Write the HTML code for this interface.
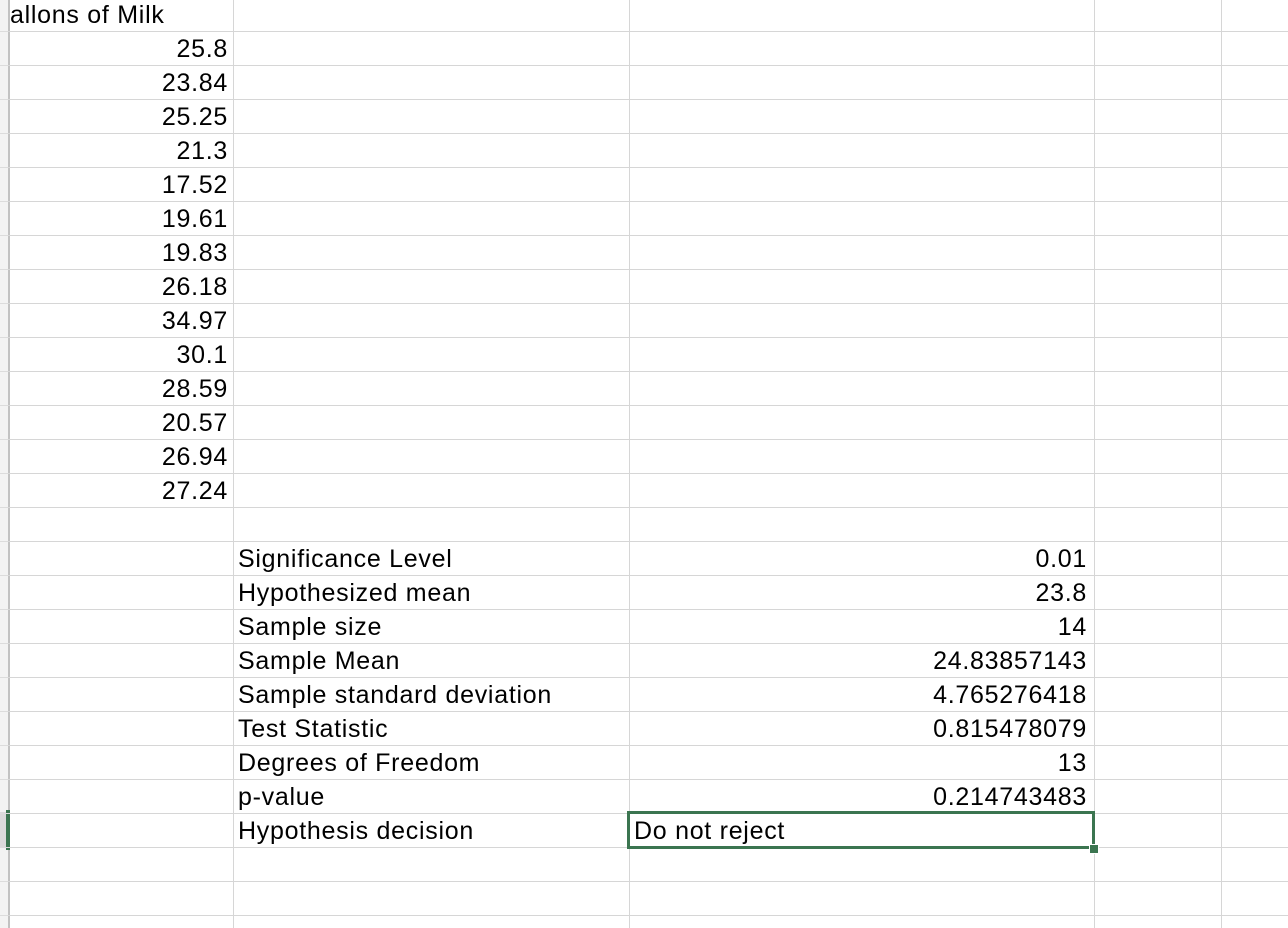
<!DOCTYPE html>
<html><head><style>
body{margin:0;width:1288px;height:928px;overflow:hidden;background:#fff;font-family:"Liberation Sans",Arial,sans-serif;font-size:25px;letter-spacing:0.72px;color:#000;position:relative}
.h{position:absolute;left:8px;right:0;height:1px;background:#d6d6d6}
.v{position:absolute;top:0;bottom:0;width:1px;background:#d6d6d6}
.t{position:absolute;height:34px;line-height:34px;white-space:nowrap;margin-top:1px}
.r{text-align:right}
</style></head><body>
<div style="position:absolute;left:0;top:0;width:8px;height:928px;background:#f3f3f3"></div>
<div style="position:absolute;left:0;top:812px;width:8px;height:36px;background:#dadada"></div>
<div style="position:absolute;left:8px;top:0;width:2px;height:928px;background:#c2c2c2"></div>
<div style="position:absolute;left:6px;top:810px;width:4px;height:40px;background:#3b7550"></div>
<div class="v" style="left:233px"></div>
<div class="v" style="left:629px"></div>
<div class="v" style="left:1094px"></div>
<div class="v" style="left:1221px"></div>
<div id="hl"></div>
<script>
var s='';for(var k=0;k<27;k++){s+='<div class="h" style="top:'+(31+34*k)+'px"></div>';s+='<div style="position:absolute;left:0;width:8px;height:1px;background:#dcdcdc;top:'+(31+34*k)+'px"></div>';}
document.getElementById('hl').innerHTML=s;
</script>
<div class="t" style="left:10px;top:-3px">allons of Milk</div>
<div class="t r" style="left:10px;width:218px;top:31px">25.8</div>
<div class="t r" style="left:10px;width:218px;top:65px">23.84</div>
<div class="t r" style="left:10px;width:218px;top:99px">25.25</div>
<div class="t r" style="left:10px;width:218px;top:133px">21.3</div>
<div class="t r" style="left:10px;width:218px;top:167px">17.52</div>
<div class="t r" style="left:10px;width:218px;top:201px">19.61</div>
<div class="t r" style="left:10px;width:218px;top:235px">19.83</div>
<div class="t r" style="left:10px;width:218px;top:269px">26.18</div>
<div class="t r" style="left:10px;width:218px;top:303px">34.97</div>
<div class="t r" style="left:10px;width:218px;top:337px">30.1</div>
<div class="t r" style="left:10px;width:218px;top:371px">28.59</div>
<div class="t r" style="left:10px;width:218px;top:405px">20.57</div>
<div class="t r" style="left:10px;width:218px;top:439px">26.94</div>
<div class="t r" style="left:10px;width:218px;top:473px">27.24</div>

<div class="t" style="left:238px;top:541px">Significance Level</div>
<div class="t" style="left:238px;top:575px">Hypothesized mean</div>
<div class="t" style="left:238px;top:609px">Sample size</div>
<div class="t" style="left:238px;top:643px">Sample Mean</div>
<div class="t" style="left:238px;top:677px">Sample standard deviation</div>
<div class="t" style="left:238px;top:711px">Test Statistic</div>
<div class="t" style="left:238px;top:745px">Degrees of Freedom</div>
<div class="t" style="left:238px;top:779px">p-value</div>
<div class="t" style="left:238px;top:813px">Hypothesis decision</div>

<div class="t r" style="left:630px;width:457px;top:541px">0.01</div>
<div class="t r" style="left:630px;width:457px;top:575px">23.8</div>
<div class="t r" style="left:630px;width:457px;top:609px">14</div>
<div class="t r" style="left:630px;width:457px;top:643px">24.83857143</div>
<div class="t r" style="left:630px;width:457px;top:677px">4.765276418</div>
<div class="t r" style="left:630px;width:457px;top:711px">0.815478079</div>
<div class="t r" style="left:630px;width:457px;top:745px">13</div>
<div class="t r" style="left:630px;width:457px;top:779px">0.214743483</div>

<div style="position:absolute;left:627px;top:811px;width:462px;height:32px;border:3px solid #3b7550;background:#fff"></div>
<div class="t" style="left:634px;top:813px">Do not reject</div>
<div style="position:absolute;left:1089px;top:844px;width:8px;height:8px;background:#3b7550;border:1px solid #fff"></div>
</body></html>
